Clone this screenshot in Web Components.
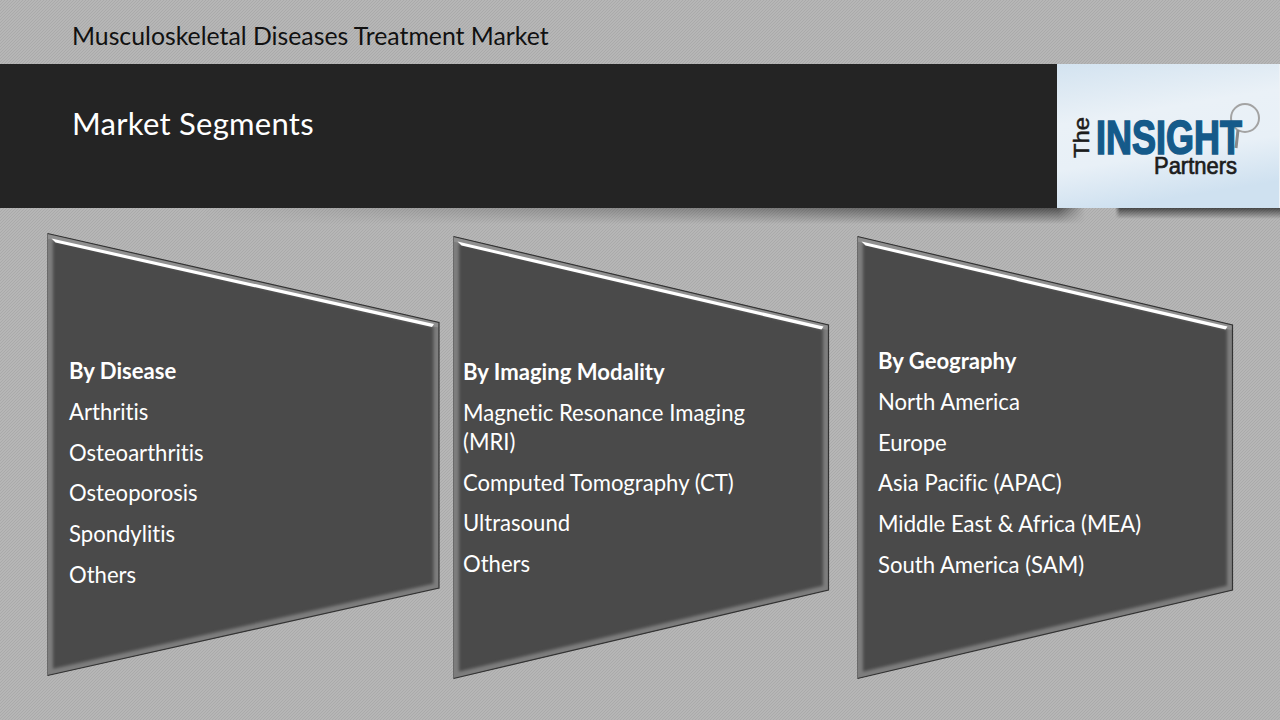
<!DOCTYPE html>
<html>
<head>
<meta charset="utf-8">
<title>Market Segments</title>
<style>
    html, body { margin: 0; padding: 0; }
    body { width: 1280px; height: 720px; overflow: hidden; font-family: Lato, "Open Sans", sans-serif; font-variant-ligatures: none; }
</style>
</head>
<body>
<slide-page>
    <slide-header slot="header" subject="Musculoskeletal Diseases Treatment Market" heading="Market Segments"></slide-header>
    <segment-card style="--w: 393px; --ml: 47px; --mt: 26px; --pl: 22px; --pt: 122px;" points="0.5,-0.5 392,88.5 392,354 0.5,441.5">
        <b>By Disease</b>
        <span>Arthritis</span>
        <span>Osteoarthritis</span>
        <span>Osteoporosis</span>
        <span>Spondylitis</span>
        <span>Others</span>
    </segment-card>
    <segment-card style="--w: 376px; --ml: 13px; --mt: 29px; --pl: 10px; --pt: 120px;" points="0.5,-0.5 375.5,88 375.5,353 0.5,441.5">
        <b>By Imaging Modality</b>
        <span>Magnetic Resonance Imaging (MRI)</span>
        <span>Computed Tomography (CT)</span>
        <span>Ultrasound</span>
        <span>Others</span>
    </segment-card>
    <segment-card style="--w: 376px; --ml: 28px; --mt: 29px; --pl: 21px; --pt: 109px;" points="0.5,-0.5 375.5,88 375.5,353 0.5,441.5">
        <b>By Geography</b>
        <span>North America</span>
        <span>Europe</span>
        <span>Asia Pacific (APAC)</span>
        <span>Middle East &amp; Africa (MEA)</span>
        <span>South America (SAM)</span>
    </segment-card>
</slide-page>

<script>
class SlidePage extends HTMLElement {
    constructor() {
        super()
        this.attachShadow({ mode: "open" })
        this.shadowRoot.innerHTML = `
        <style>
            :host {
                display: block;
                width: 1280px;
                height: 720px;
                overflow: hidden;
                background-color: #b0b0b0;
                background-image: linear-gradient(135deg, #b6b6b6 25%, #aaa 25%, #aaa 50%, #b6b6b6 50%, #b6b6b6 75%, #aaa 75%);
                background-size: 3px 3px;
            }
            .cards {
                display: flex;
                align-items: flex-start;
            }
        </style>
        <slot name="header"></slot>
        <div class="cards"><slot></slot></div>
        `
    }
}
customElements.define('slide-page', SlidePage)

class SlideHeader extends HTMLElement {
    constructor() {
        super()
        this.attachShadow({ mode: "open" })
    }

    connectedCallback() {
        this.shadowRoot.innerHTML = `
        <style>
            :host { display: block; position: relative; }
            .subject {
                height: 64px;
                box-sizing: border-box;
                padding: 19px 0 0 72px;
                font-size: 24.8px;
                line-height: 33px;
                color: #111;
            }
            .band {
                display: flex;
                justify-content: space-between;
                height: 144px;
                background: #242424;
            }
            h1 {
                margin: 0;
                padding: 39px 0 0 72px;
                font-size: 31px;
                line-height: 40px;
                font-weight: 400;
                letter-spacing: 0.27px;
                color: #fff;
            }
            .logo { display: block; width: 223px; height: 144px; }
            .shadow {
                position: absolute;
                top: 208px;
                pointer-events: none;
            }
            .left {
                left: 200px;
                width: 885px;
                height: 16px;
                background: linear-gradient(#0008, #0000);
                -webkit-mask-image: linear-gradient(90deg, transparent, #0008 60%, #000 90%, #000 97%, transparent);
            }
            .right {
                left: 1115px;
                width: 165px;
                height: 11px;
                background: linear-gradient(#0009, #0000);
                -webkit-mask-image: linear-gradient(90deg, transparent, #000 3%);
            }
        </style>
        <div class="subject">${this.getAttribute("subject")}</div>
        <div class="band">
            <h1>${this.getAttribute("heading")}</h1>
            <svg class="logo" viewBox="0 0 223 144">
                <defs>
                    <linearGradient id="sky" x1="0" y1="0" x2="0.25" y2="1">
                        <stop offset="0" stop-color="#d3e3f0"/>
                        <stop offset="0.4" stop-color="#eaf1f7"/>
                        <stop offset="0.7" stop-color="#e8f0f7"/>
                        <stop offset="1" stop-color="#cfe1f0"/>
                    </linearGradient>
                </defs>
                <rect width="222" height="144" fill="url(#sky)"/>
                <rect x="222" width="1" height="144" fill="#eef2f6"/>
                <circle cx="188" cy="54" r="14" fill="none" stroke="#a3a3a3" stroke-width="2"/>
                <path d="M181 66 L179 84" stroke="#8a8a8a" stroke-width="3" fill="none"/>
                <text transform="translate(39 90) scale(0.9 1.225)" font-family="Liberation Sans" font-weight="700" font-size="40" fill="#155a8a" stroke="#155a8a" stroke-width="1.4">INSIGHT</text>
                <text x="97" y="110" font-family="Liberation Sans" font-weight="400" font-size="24" fill="#1c1c1c" stroke="#1c1c1c" stroke-width="0.7" textLength="83" lengthAdjust="spacingAndGlyphs">Partners</text>
                <text transform="translate(32 94) rotate(-90)" font-family="Liberation Sans" font-weight="400" font-size="22" fill="#1c1c1c" stroke="#1c1c1c" stroke-width="0.5" textLength="41" lengthAdjust="spacingAndGlyphs">The</text>
            </svg>
        </div>
        <div class="shadow left"></div>
        <div class="shadow right"></div>
        `
    }
}
customElements.define('slide-header', SlideHeader)

class SegmentCard extends HTMLElement {
    constructor() {
        super()
        this.attachShadow({ mode: "open" })
    }

    connectedCallback() {
        const pts = this.getAttribute("points")
        const [tl, tr, br, bl] = pts.split(" ").map(s => s.split(",").map(Number))
        const w = tr[0]

        this.shadowRoot.innerHTML = `
        <style>
            :host {
                display: block;
                position: relative;
                flex: none;
                box-sizing: border-box;
                width: var(--w);
                height: 442px;
                margin: var(--mt) 0 0 var(--ml);
                padding: var(--pt) 60px 0 var(--pl);
                color: #fff;
                font-size: 22.1px;
                line-height: 29px;
            }
            svg { position: absolute; left: 0; top: 0; overflow: visible; }
            .list { position: relative; display: flex; flex-direction: column; gap: 11.8px; }
        </style>
        <svg width="${w + 1}" height="442">
            <defs>
                <clipPath id="inside"><polygon points="${pts}"/></clipPath>
                <filter id="soft"><feGaussianBlur stdDeviation="0.6"/></filter>
                <filter id="softer"><feGaussianBlur stdDeviation="1.6"/></filter>
            </defs>
            <polygon points="${pts}" fill="#4a4a4a"/>
            <g clip-path="url(#inside)" fill="none">
                <polygon points="${pts}" stroke="#7d7d7d" stroke-width="11" filter="url(#softer)"/>
                <path d="M${bl[0]},${bl[1]} L${tl[0]},${tl[1]}" stroke="#9a9a9a" stroke-width="4" filter="url(#soft)"/>
                <path d="M${tl[0]},${tl[1] + 1} L${tr[0]},${tr[1] + 1}" stroke="#8f8f8f" stroke-width="8"/>
            </g>
            <polygon points="${tl[0] + 4},${tl[1] + 5} ${tr[0] - 5},${tr[1] + 1.5} ${tr[0] - 7},${tr[1] + 4.5} ${tl[0] + 8},${tl[1] + 9}" fill="#fff" filter="url(#soft)"/>
            <path d="M${tl[0]},${tl[1]} L${tr[0]},${tr[1]} L${br[0]},${br[1]} L${bl[0]},${bl[1]}" fill="none" stroke="#333" stroke-width="1.2"/>
            <path d="M${bl[0]},${bl[1]} L${tl[0]},${tl[1]}" fill="none" stroke="#6a6a6a" stroke-width="1"/>
        </svg>
        <div class="list"><slot></slot></div>
        `
    }
}
customElements.define('segment-card', SegmentCard)
</script>
</body>
</html>
